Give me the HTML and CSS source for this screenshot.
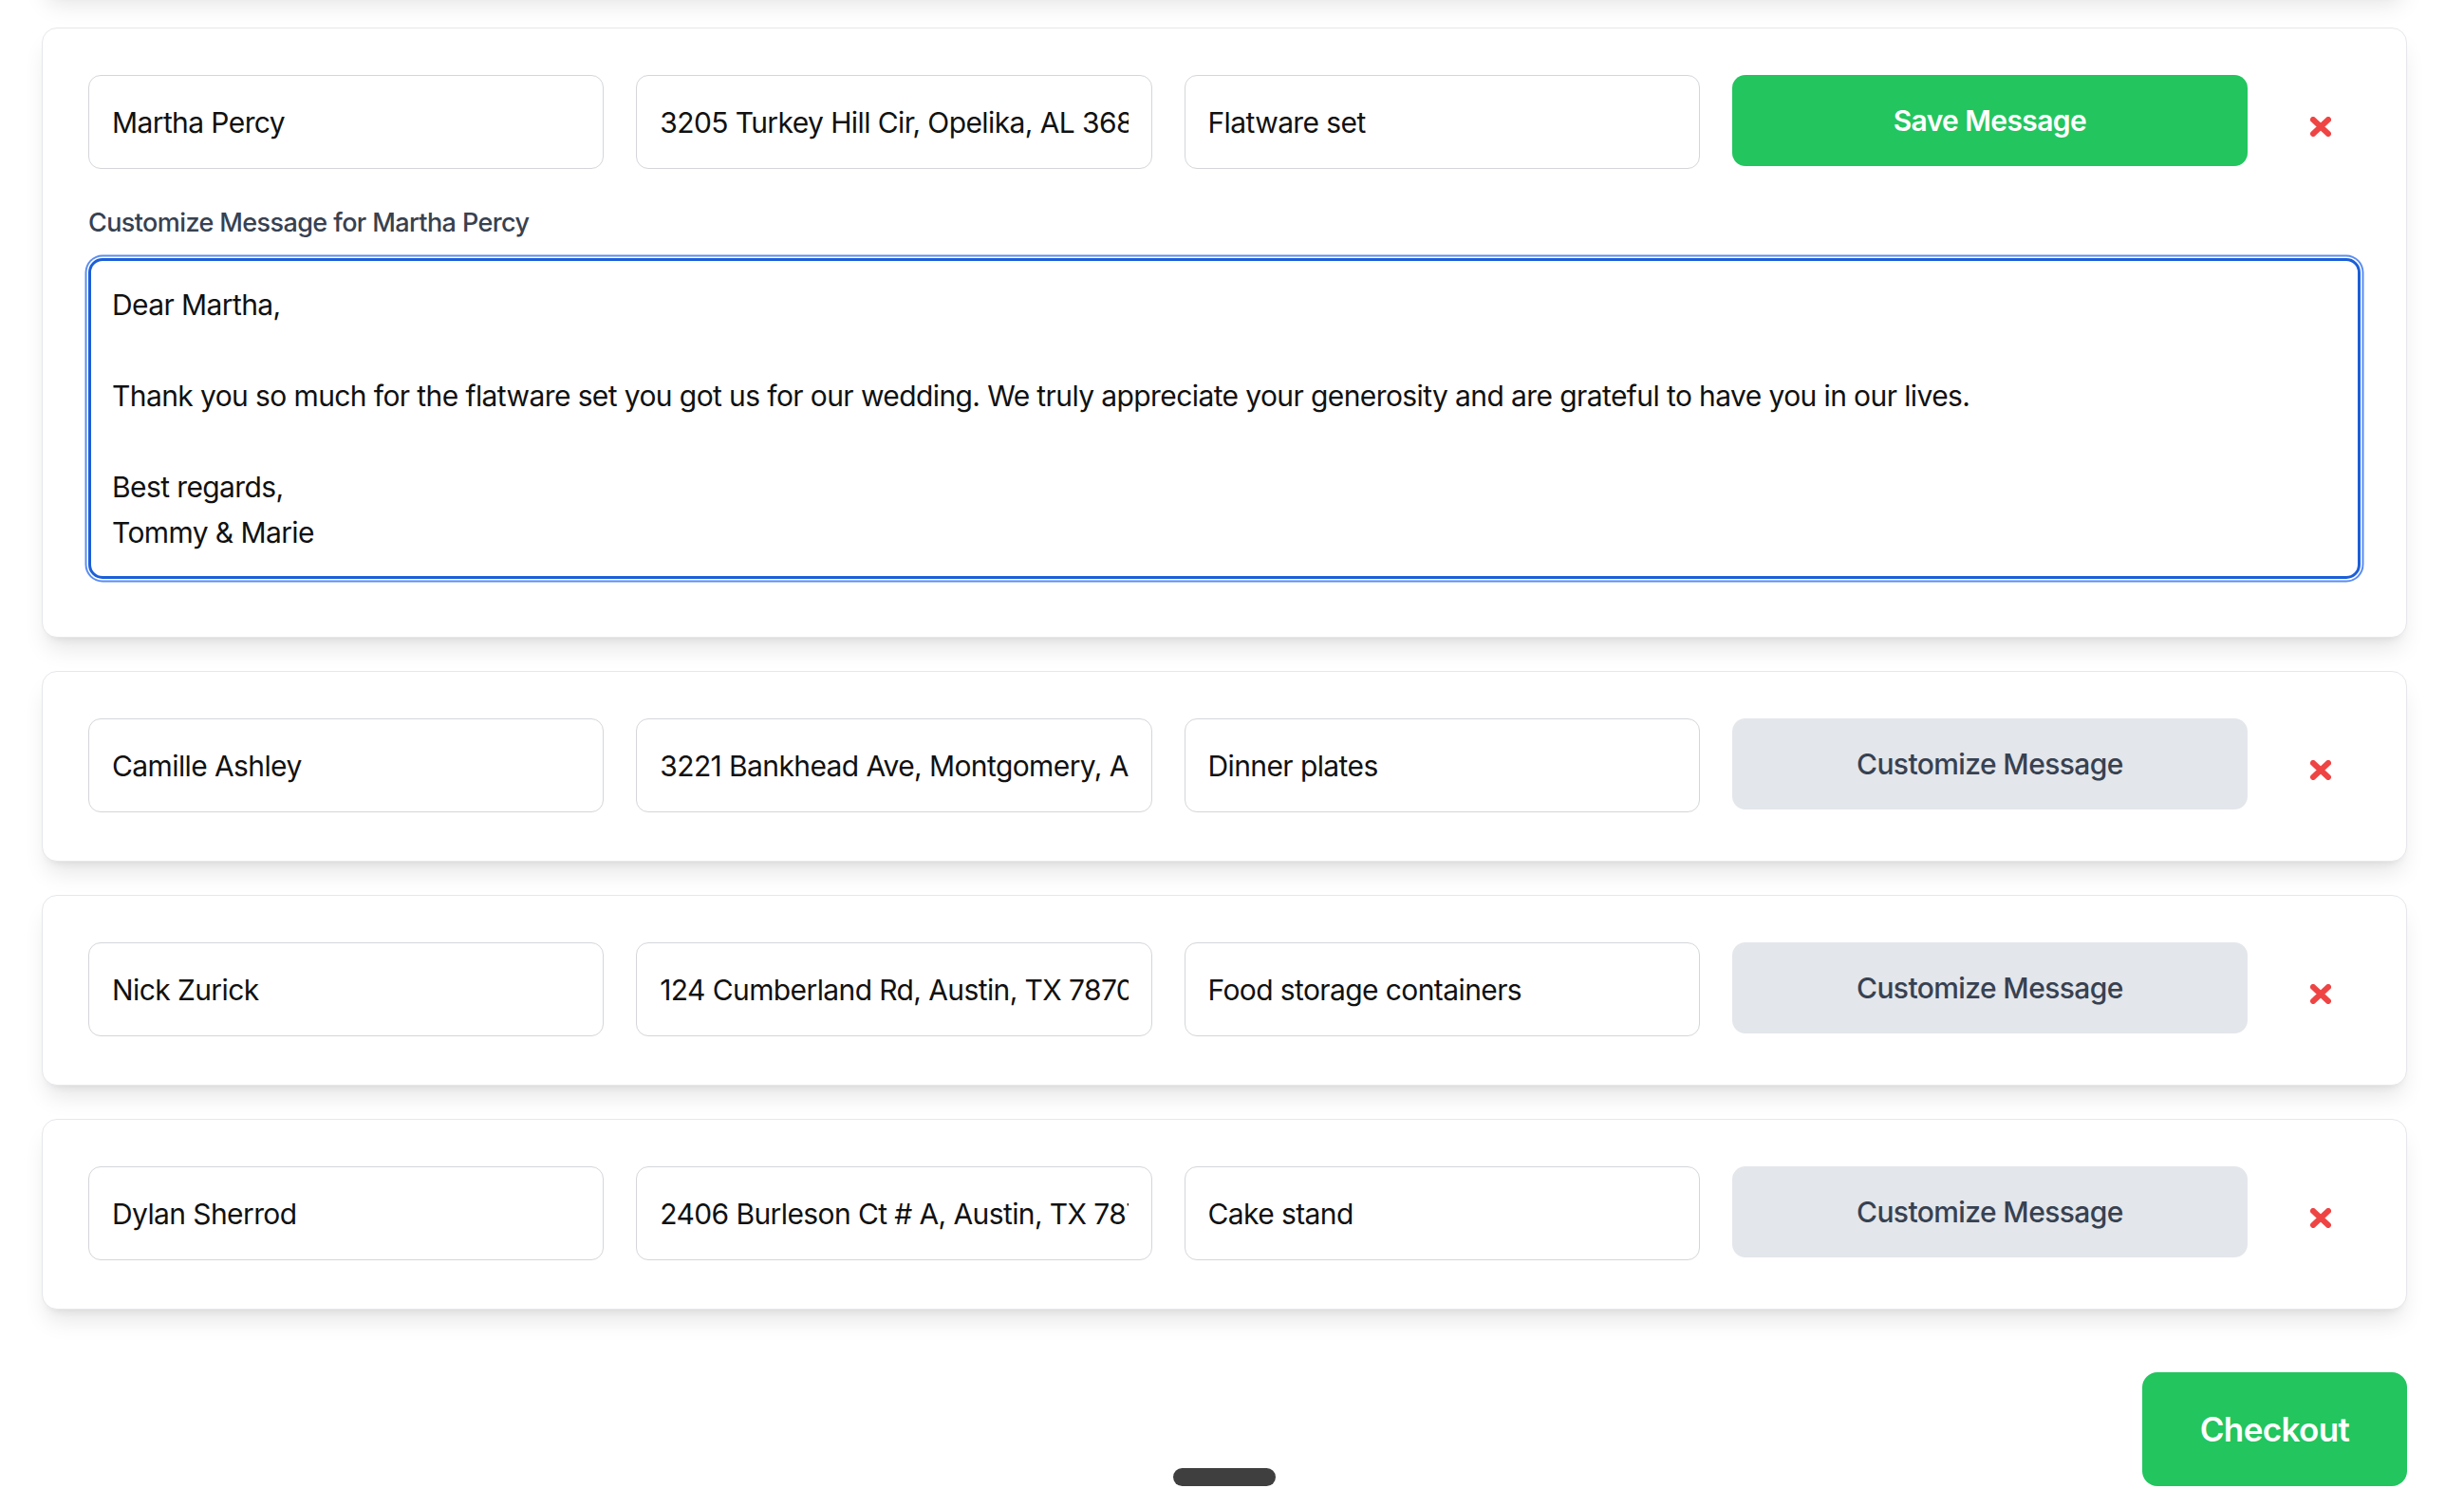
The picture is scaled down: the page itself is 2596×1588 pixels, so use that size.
FILE: index.html
```html
<!DOCTYPE html>
<html>
<head>
  <meta charset="UTF-8">
  <title>Thank You Notes</title>
  <link rel="stylesheet" href="styles.css">
</head>
<body>
<div class="page">
  <div class="list">
    <!-- previous guest, scrolled out of view -->
    <div class="card card-prev"></div>

    <div class="card">
      <div class="row">
        <input class="field" type="text" value="Martha Percy">
        <input class="field" type="text" value="3205 Turkey Hill Cir, Opelika, AL 36801">
        <input class="field" type="text" value="Flatware set">
        <button class="btn btn-green">Save Message</button>
        <span class="remove"><svg viewBox="0 0 22 21" width="22" height="21"><path d="M3 3 L19 18 M19 3 L3 18"/></svg></span>
      </div>
      <label class="msg-label" for="msg1">Customize Message for Martha Percy</label>
      <textarea class="msg" id="msg1">Dear Martha,

Thank you so much for the flatware set you got us for our wedding. We truly appreciate your generosity and are grateful to have you in our lives.

Best regards,
Tommy &amp; Marie</textarea>
    </div>

    <div class="card">
      <div class="row">
        <input class="field" type="text" value="Camille Ashley">
        <input class="field" type="text" value="3221 Bankhead Ave, Montgomery, AL 36111">
        <input class="field" type="text" value="Dinner plates">
        <button class="btn btn-gray">Customize Message</button>
        <span class="remove"><svg viewBox="0 0 22 21" width="22" height="21"><path d="M3 3 L19 18 M19 3 L3 18"/></svg></span>
      </div>
    </div>

    <div class="card">
      <div class="row">
        <input class="field" type="text" value="Nick Zurick">
        <input class="field" type="text" value="124 Cumberland Rd, Austin, TX 78704">
        <input class="field" type="text" value="Food storage containers">
        <button class="btn btn-gray">Customize Message</button>
        <span class="remove"><svg viewBox="0 0 22 21" width="22" height="21"><path d="M3 3 L19 18 M19 3 L3 18"/></svg></span>
      </div>
    </div>

    <div class="card">
      <div class="row">
        <input class="field" type="text" value="Dylan Sherrod">
        <input class="field" type="text" value="2406 Burleson Ct # A, Austin, TX 78741">
        <input class="field" type="text" value="Cake stand">
        <button class="btn btn-gray">Customize Message</button>
        <span class="remove"><svg viewBox="0 0 22 21" width="22" height="21"><path d="M3 3 L19 18 M19 3 L3 18"/></svg></span>
      </div>
    </div>
  </div>

  <div class="footer">
    <span></span>
    <span class="handle"></span>
    <button class="checkout">Checkout</button>
  </div>
</div>
</body>
</html>
```

FILE: styles.css
```css
*{box-sizing:border-box;}
html,body{margin:0;padding:0;background:#fff;}
body{
  font-family:Inter,"Liberation Sans",sans-serif;
  letter-spacing:-0.6px;
  color:#111;
  overflow:hidden;
}
.page{width:2492px;margin-left:44px;}
.list{display:flex;flex-direction:column;gap:35px;margin-top:-207px;}

.card{
  background:#fff;
  border:1px solid #e5e7eb;
  border-radius:16px;
  padding:49px 48px 51px;
  box-shadow:0 16px 25px -5px rgba(0,0,0,.1),0 7px 10px -7px rgba(0,0,0,.1);
}
.card-prev{height:201px;}
.row{
  display:grid;
  grid-template-columns:repeat(4,minmax(0,1fr)) 85px;
  column-gap:34px;
  align-items:start;
}

.field{
  width:100%;
  height:99px;
  border:1.5px solid #d4d6da;
  border-radius:13px;
  padding:0 24px;
  font-family:inherit;font-size:30px;letter-spacing:-0.6px;color:#111;
  background:#fff;outline:none;
}

.btn{
  width:100%;
  height:96px;
  border:0;border-radius:14px;
  font-family:inherit;font-size:30px;letter-spacing:-0.6px;
  cursor:pointer;
}
.btn-green{background:#22c55e;color:#fff;font-weight:600;}
.btn-gray{background:#e3e6ea;color:#374151;font-weight:500;}

.remove{height:99px;display:flex;align-items:center;justify-content:center;padding-top:9px;}
.remove svg path{stroke:#ef4444;stroke-width:6;stroke-linecap:round;fill:none;}

.msg-label{
  display:block;
  margin:37px 0 17px;
  font-size:27px;line-height:40px;
  font-weight:500;color:#374151;
}
.msg{
  display:block;
  width:100%;height:338px;
  margin-bottom:10px;
  border:3px solid #1b5fd8;
  border-radius:15px;
  box-shadow:0 0 0 1.5px #fff,0 0 0 3.5px #5b8def;
  padding:22px 22px;
  font-family:inherit;font-size:30px;line-height:48px;letter-spacing:-0.6px;color:#111;
  resize:none;outline:none;overflow:hidden;
}

.footer{
  display:grid;
  grid-template-columns:1fr auto 1fr;
  align-items:end;
  margin-top:66px;
}
.handle{width:108px;height:19px;border-radius:10px;background:#3f3f3f;}
.checkout{
  justify-self:end;
  width:279px;height:120px;
  border:0;border-radius:16px;
  background:#22c55e;color:#fff;
  font-family:inherit;font-size:35px;font-weight:600;letter-spacing:-0.6px;
}
```
